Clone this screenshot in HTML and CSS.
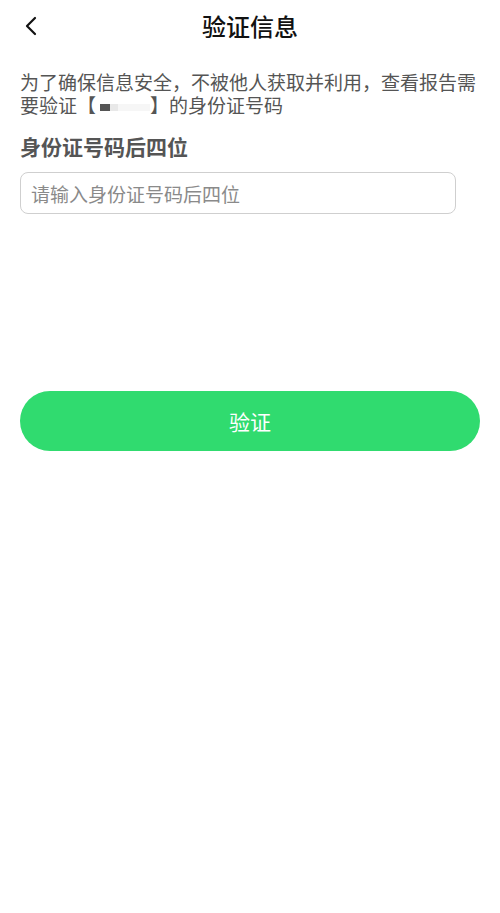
FILE: index.html
```html
<!DOCTYPE html>
<html lang="zh-CN">
<head>
  <meta charset="UTF-8">
  <meta name="viewport" content="width=device-width, initial-scale=1.0">
  <title>验证信息</title>
  <link rel="stylesheet" href="styles.css">
</head>
<body>
  <div class="page">
    <header class="nav">
      <button class="back" type="button" aria-label="返回">
        <svg width="14" height="20" viewBox="0 0 14 20">
          <path d="M11 2 L3 10 L11 18" fill="none" stroke="#111" stroke-width="2.2" stroke-linecap="round" stroke-linejoin="round"/>
        </svg>
      </button>
      <h1>验证信息</h1>
    </header>

    <p class="notice">为了确保信息安全，不被他人获取并利用，查看报告需要验证【<span class="mask"><i class="dark"></i><i class="light"></i><i class="faint"></i></span>】的身份证号码</p>

    <form class="verify">
      <label class="field-label" for="idTail">身份证号码后四位</label>
      <input type="text" id="idTail" class="field" placeholder="请输入身份证号码后四位" maxlength="4">
      <button type="submit" class="submit">验证</button>
    </form>
  </div>
</body>
</html>
```

FILE: styles.css
```css
body {
  margin: 0;
  background: #ffffff;
  font-family: "Noto Sans CJK SC", "Noto Sans", sans-serif;
  color: #333;
}

.page {
  padding: 0 20px;
}

.nav {
  position: relative;
  height: 50px;
  display: flex;
  align-items: center;
  justify-content: center;
}

.back {
  position: absolute;
  left: 4px;
  top: 16px;
  padding: 0;
  border: none;
  background: none;
}

.nav h1 {
  margin: 0;
  font-size: 24px;
  font-weight: 500;
  color: #111;
}

.notice {
  margin: 20px 0 0;
  font-size: 19px;
  line-height: 23px;
  color: #555;
}

.mask {
  display: inline-block;
  width: 50px;
  height: 7px;
  margin-left: 4px;
  background: linear-gradient(to right, #555 0, #555 10px, #e8e8e8 10px, #e8e8e8 18px, #f6f6f6 18px);
  vertical-align: middle;
}

.mask i {
  display: none;
}

.verify {
  display: flex;
  flex-direction: column;
}

.field-label {
  margin-top: 16px;
  font-size: 21px;
  font-weight: 700;
  color: #555;
  line-height: 28px;
}

.field {
  margin-top: 12px;
  width: 436px;
  height: 42px;
  box-sizing: border-box;
  padding: 0 10px;
  border: 1px solid #cfcfcf;
  border-radius: 8px;
  font-family: inherit;
  font-size: 19px;
  color: #333;
  outline: none;
}

.field::placeholder {
  color: #8a8a8a;
}

.submit {
  margin-top: 177px;
  height: 60px;
  border: none;
  border-radius: 30px;
  background: #30db6f;
  color: #fff;
  font-family: inherit;
  font-size: 21px;
}
```
